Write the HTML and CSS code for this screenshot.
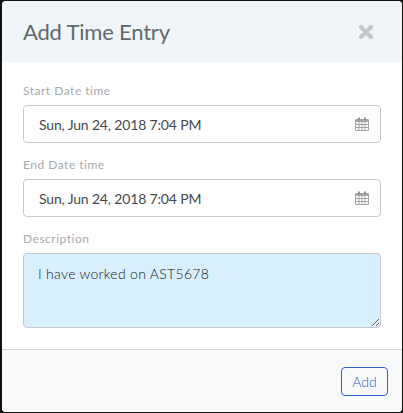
FILE: index.html
```html
<!DOCTYPE html>
<html lang="en">
<head>
    <meta charset="UTF-8">
    <meta name="viewport" content="width=device-width, initial-scale=1.0">
    <title>Add Time Entry</title>
    <link rel="stylesheet" href="styles.css">
</head>
<body>

<div class="modal">
    <div class="modal-header">
        <h1>Add Time Entry</h1>
        <svg class="close-icon" width="16" height="16" viewBox="0 0 16 16">
            <path d="M3 3L13 13M13 3L3 13" stroke="#c3cacc" stroke-width="4.4" stroke-linecap="round"/>
        </svg>
    </div>

    <div class="modal-body">
        <label class="field-label">Start Date time</label>
        <div class="date-input">
            <span>Sun, Jun 24, 2018 7:04 PM</span>
            <svg class="calendar-icon" width="14" height="14" viewBox="0 0 14 14">
                <path d="M0.5 3H13.5V13.5H0.5Z" fill="#fff" stroke="#a2a6a8"/>
                <path d="M0.5 2H13.5V5H0.5Z" fill="#a2a6a8"/>
                <path d="M3 0.5H5V3H3ZM9 0.5H11V3H9Z" fill="#8f9496"/>
                <path d="M4 5V13M7 5V13M10 5V13M1 7.5H13M1 10.5H13" stroke="#a2a6a8" stroke-width="1"/>
            </svg>
        </div>

        <label class="field-label">End Date time</label>
        <div class="date-input">
            <span>Sun, Jun 24, 2018 7:04 PM</span>
            <svg class="calendar-icon" width="14" height="14" viewBox="0 0 14 14">
                <path d="M0.5 3H13.5V13.5H0.5Z" fill="#fff" stroke="#a2a6a8"/>
                <path d="M0.5 2H13.5V5H0.5Z" fill="#a2a6a8"/>
                <path d="M3 0.5H5V3H3ZM9 0.5H11V3H9Z" fill="#8f9496"/>
                <path d="M4 5V13M7 5V13M10 5V13M1 7.5H13M1 10.5H13" stroke="#a2a6a8" stroke-width="1"/>
            </svg>
        </div>

        <label class="field-label" for="description">Description</label>
        <textarea class="description" id="description">I have worked on AST5678</textarea>
    </div>

    <div class="modal-footer">
        <button class="btn-add">Add</button>
    </div>
</div>

</body>
</html>
```

FILE: styles.css
```css
html, body {
    height: 100%;
}
body {
    font-family: Lato, 'Open Sans', sans-serif;
    background-color: #121212;
    margin: 0;
    padding: 1px 1px 1px 2px;
    box-sizing: border-box;
    overflow: hidden;
}
.modal {
    display: flex;
    flex-direction: column;
    height: 100%;
    background: #fff;
    border-radius: 4px;
    overflow: hidden;
}
.modal-header {
    display: flex;
    justify-content: space-between;
    align-items: center;
    height: 61px;
    padding: 0 28px 0 21px;
    background: #eff5f8;
}
.modal-header h1 {
    margin: 0;
    font-size: 22px;
    font-weight: 400;
    letter-spacing: -0.2px;
    color: #62696c;
}
.modal-body {
    flex: 1;
    padding: 19px 21px 0;
}
.field-label {
    display: block;
    height: 24px;
    font-size: 12px;
    line-height: 20px;
    letter-spacing: 0.5px;
    color: #a6aaac;
}
.date-input {
    display: flex;
    justify-content: space-between;
    align-items: center;
    box-sizing: border-box;
    height: 38px;
    margin-bottom: 12px;
    padding: 0 11px 0 15px;
    border: 1px solid #c6cacc;
    border-radius: 4px;
    font-size: 14px;
    letter-spacing: -0.16px;
    color: #44494b;
}
.calendar-icon {
    display: block;
}
.description {
    display: block;
    box-sizing: border-box;
    width: 100%;
    height: 75px;
    margin: 0;
    padding: 11px 14px;
    background: #d8f0fe;
    border: 1px solid #c6cacc;
    border-radius: 4px;
    font-family: Lato, 'Open Sans', sans-serif;
    font-size: 14px;
    font-weight: 300;
    letter-spacing: 0.3px;
    color: #15181a;
}
.modal-footer {
    display: flex;
    justify-content: flex-end;
    align-items: center;
    height: 62px;
    padding: 0 14px 0 0;
    background: #f8f9fb;
    border-top: 1px solid #d5d7d9;
}
.btn-add {
    width: 47px;
    height: 29px;
    padding: 0;
    background: transparent;
    border: 1px solid #2d62c8;
    border-radius: 4px;
    font-family: Lato, 'Open Sans', sans-serif;
    font-size: 14px;
    font-weight: 300;
    color: #2d62c8;
}
```
